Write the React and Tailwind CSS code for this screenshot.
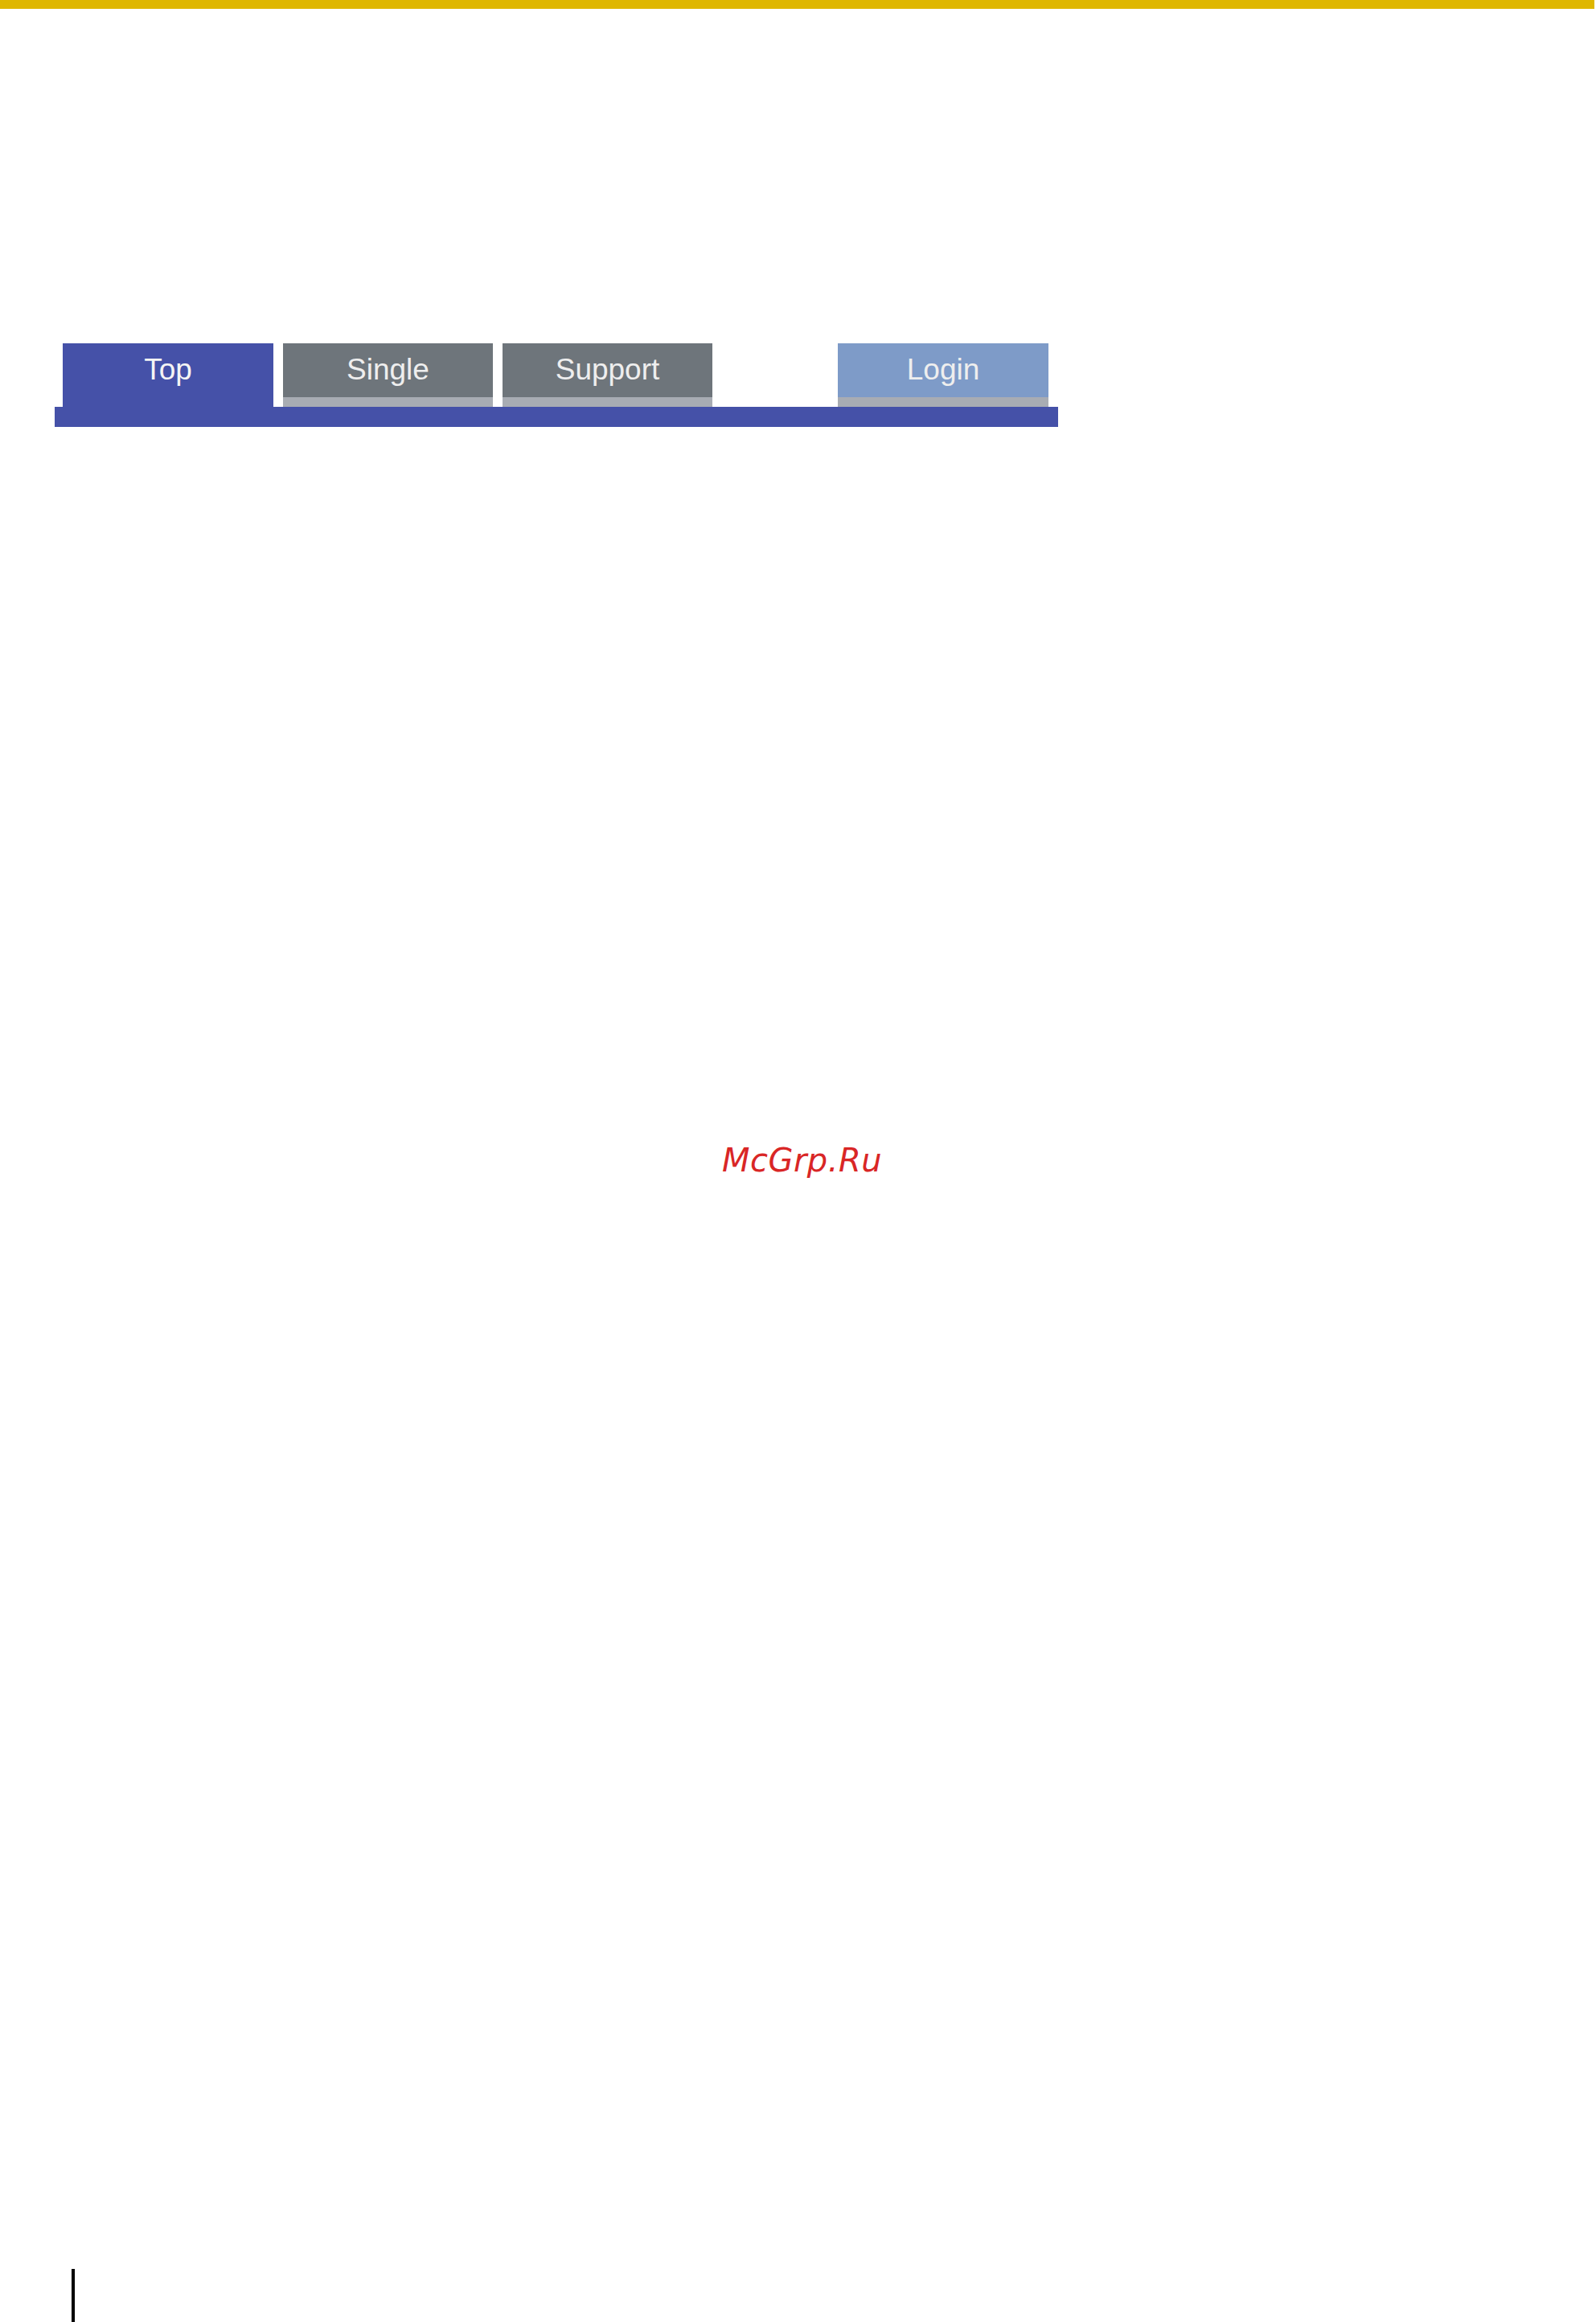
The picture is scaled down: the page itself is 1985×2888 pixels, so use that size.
// App.jsx
const tabs = [
  { label: 'Top', active: true },
  { label: 'Single' },
  { label: 'Support' },
  { label: 'Login', login: true },
];

function Tab({ tab, className }) {
  if (tab.active) {
    return (
      <div className={`w-[262px] bg-[#4551a8] pt-[14px] text-center text-[37px] leading-none text-[#f4f4f4] ${className}`}>
        {tab.label}
      </div>
    );
  }
  const face = tab.login ? 'bg-[#7e9bc8]' : 'bg-[#6e757b]';
  return (
    <div className={`flex w-[261px] flex-col ${className}`}>
      <div className={`h-[67px] pt-[14px] text-center text-[37px] leading-none text-[#eeeeee] ${face}`}>
        {tab.label}
      </div>
      <div className="h-[12px] bg-[#a8acb3]" />
    </div>
  );
}

export default function App() {
  return (
    <div
      className="flex h-[2888px] w-[1985px] flex-col overflow-hidden bg-white"
      style={{ fontFamily: '"Liberation Sans", Arial, sans-serif' }}
    >
      {/* yellow header rule */}
      <div className="h-[11px] w-[1983px] bg-[#dfb700]" />

      {/* tab bar */}
      <div className="ml-[68px] mt-[416px] w-[1248px]">
        <div className="flex h-[79px] pl-[10px]">
          <Tab tab={tabs[0]} />
          <Tab tab={tabs[1]} className="ml-[12px]" />
          <Tab tab={tabs[2]} className="ml-[12px]" />
          <Tab tab={tabs[3]} className="ml-[156px] w-[262px]" />
        </div>
        <div className="h-[25px] bg-[#4551a8]" />
      </div>

      {/* watermark */}
      <div
        className="ml-[10px] mt-[892px] text-center text-[40px] italic leading-none tracking-[0.5px] text-[#d92626]"
        style={{ fontFamily: '"DejaVu Sans", sans-serif' }}
      >
        McGrp.Ru
      </div>

      {/* page edge mark */}
      <div className="ml-[89px] mt-auto h-[66px] w-[4px] bg-black" />
    </div>
  );
}
